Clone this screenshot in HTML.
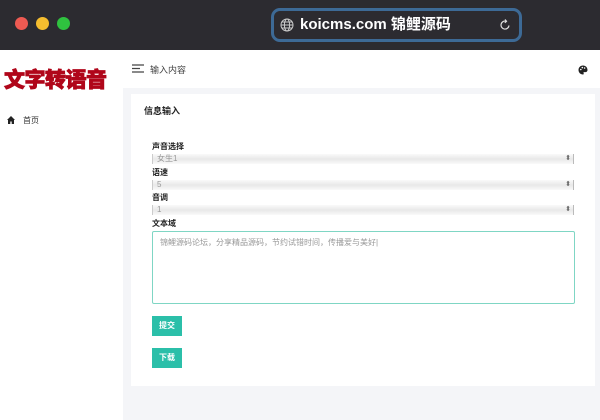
<!DOCTYPE html>
<html><head><meta charset="utf-8"><style>
*{margin:0;padding:0;box-sizing:border-box}
body{width:600px;height:420px;overflow:hidden;background:#f4f5f8;font-family:"Liberation Sans","Noto Sans CJK SC",sans-serif;position:relative}
.top{position:absolute;left:0;top:0;width:600px;height:50px;background:#2c2b30}
.dot{position:absolute;top:17px;width:13px;height:13px;border-radius:50%}
.addr{position:absolute;left:271px;top:8px;width:251px;height:34px;border:3px solid #3d6a96;border-radius:9px;background:#2c2b30;color:#fff;font-size:15px;font-weight:bold;line-height:28px;padding-left:26px}
.side{position:absolute;left:0;top:50px;width:123px;height:370px;background:#fff}
.hdr{position:absolute;left:123px;top:50px;width:477px;height:38px;background:#fff}
.card{position:absolute;left:131px;top:94px;width:464px;height:292px;background:#fff}
.lbl{position:absolute;left:152px;font-size:8px;font-weight:bold;color:#222}
.sel{position:absolute;left:152px;width:422px;height:10px;background:linear-gradient(#fafafa,#e8e8e8,#fafafa);border-left:1px solid #ccc;border-right:1px solid #bbb;font-size:8px;line-height:10px;color:#999;padding-left:4px}
.sel:after{content:"⬍";position:absolute;right:2px;top:0;font-size:7px;color:#666}
.ta{position:absolute;left:152px;top:231px;width:423px;height:73px;border:1px solid #7fd6c4;border-radius:2px;font-size:8px;color:#999;padding:5px 7px}
.btn{position:absolute;left:152px;width:30px;height:20px;background:#2bbfa9;color:#fff;font-size:8px;font-weight:bold;text-align:center;line-height:20px}
</style></head><body>
<div class="top">
<div class="dot" style="left:15px;background:#ee5a52"></div>
<div class="dot" style="left:36px;background:#f5bd2f"></div>
<div class="dot" style="left:57px;background:#2fc23f"></div>
<div class="addr"><svg style="position:absolute;left:6px;top:7px" width="14" height="14" viewBox="0 0 14 14" fill="none" stroke="#ccc" stroke-width="1"><circle cx="7" cy="7" r="6"/><ellipse cx="7" cy="7" rx="2.6" ry="6"/><path d="M1 7h12M2 4h10M2 10h10"/></svg>koicms.com 锦鲤源码<svg style="position:absolute;right:8px;top:8px" width="12" height="12" viewBox="0 0 12 12" fill="none" stroke="#ddd" stroke-width="1.2"><path d="M10 6.5A4 4 0 1 1 7 2.2"/><path d="M6 0.5l1.5 1.8L5.8 3.8"/></svg></div>
</div>
<div class="side">
<div style="position:absolute;left:4px;top:14px;font-size:21px;font-weight:900;color:#b0061a;letter-spacing:-0.5px;font-family:'Noto Sans CJK SC',sans-serif;-webkit-text-stroke:0.8px #b0061a">文字转语音</div>
<svg style="position:absolute;left:7px;top:66px" width="8" height="8" viewBox="0 0 8 8"><path d="M4 0L0 4h1v4h2.3V5.5h1.4V8H7V4h1z" fill="#222"/></svg>
<div style="position:absolute;left:23px;top:65px;font-size:8px;color:#333">首页</div>
</div>
<div class="hdr">
<svg style="position:absolute;left:9px;top:14px" width="12" height="9"><path d="M0 1h12M0 4.5h8M0 8h12" stroke="#444" stroke-width="1.2"/></svg>
<div style="position:absolute;left:27px;top:13px;font-size:9px;color:#444">输入内容</div>
<svg style="position:absolute;right:12px;top:15px" width="10" height="10" viewBox="0 0 10 10"><path d="M5 0.5C2.3 0.5 0.5 2.5 0.5 5s2 4.5 4.5 4.5c0.8 0 1-0.7 0.6-1.2-0.4-0.5-0.1-1.2 0.6-1.2H7.5c1.2 0 2-0.9 2-2C9.5 2.3 7.5 0.5 5 0.5z" fill="#222"/><circle cx="2.8" cy="4.5" r="0.8" fill="#fff"/><circle cx="4.3" cy="2.6" r="0.8" fill="#fff"/><circle cx="6.6" cy="3" r="0.8" fill="#fff"/></svg>
</div>
<div class="card"><div style="position:absolute;left:13px;top:10px;font-size:9px;font-weight:bold;color:#222">信息输入</div></div>
<div class="lbl" style="top:141px">声音选择</div><div class="sel" style="top:154px">女生1</div>
<div class="lbl" style="top:167px">语速</div><div class="sel" style="top:180px">5</div>
<div class="lbl" style="top:192px">音调</div><div class="sel" style="top:205px">1</div>
<div class="lbl" style="top:218px">文本域</div>
<div class="ta">锦鲤源码论坛，分享精品源码，节约试错时间，传播爱与美好|</div>
<div class="btn" style="top:316px">提交</div>
<div class="btn" style="top:348px">下载</div>
</body></html>
